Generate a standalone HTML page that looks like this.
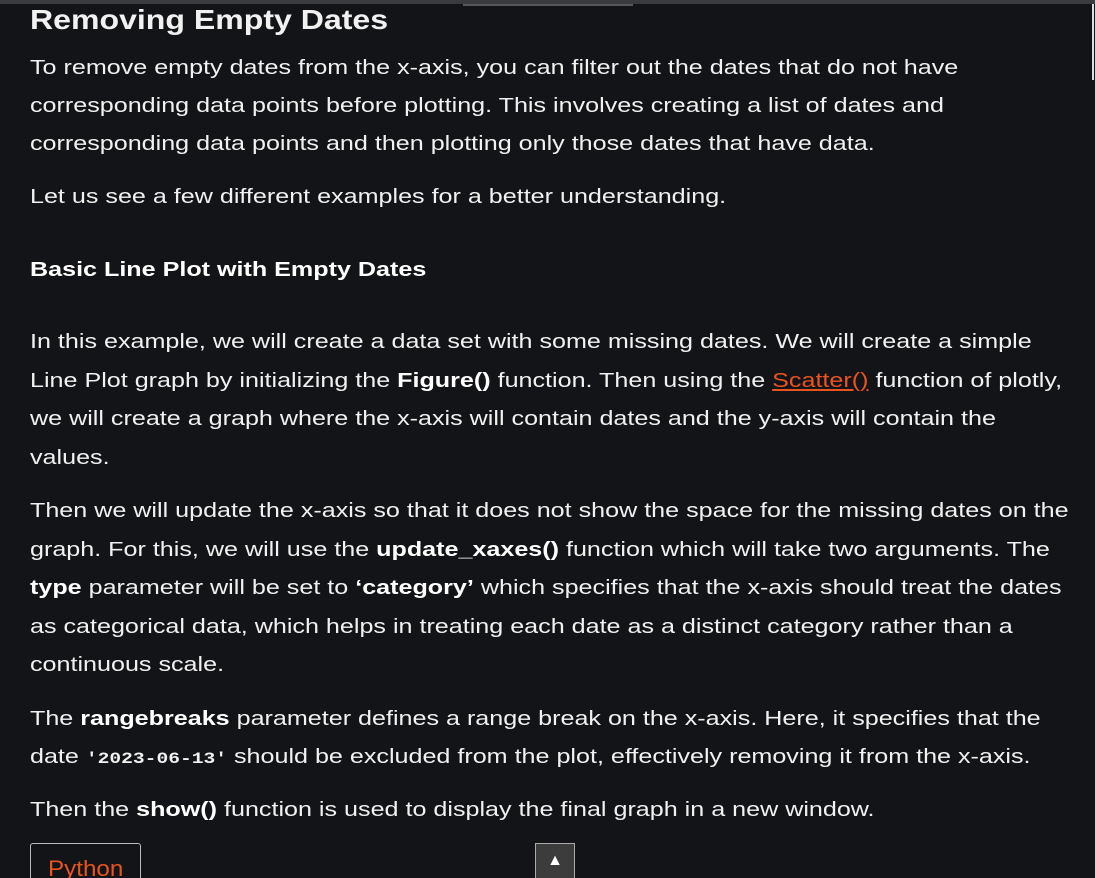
<!DOCTYPE html>
<html><head><meta charset="utf-8"><style>
html,body{margin:0;padding:0;background:#131417;width:1095px;height:878px;overflow:hidden;}
body{font-family:"Liberation Sans",sans-serif;color:#f1f1f1;position:relative;}
.topbar{position:absolute;left:0;top:0;width:1095px;height:4px;background:#3a3b3e;}
.topseg{position:absolute;left:463px;top:4px;width:170px;height:2px;background:#55575b;}
.rline{position:absolute;left:1092px;top:4px;width:2px;height:76px;background:#e0e0e0;}
.l{position:absolute;left:30px;white-space:nowrap;font-size:20.5px;line-height:24px;transform:scaleX(1.225);transform-origin:0 0;}
h2{position:absolute;left:30px;top:4px;margin:0;font-size:28px;font-weight:bold;white-space:nowrap;transform:scaleX(1.145);transform-origin:0 0;}
b{font-weight:bold;color:#fff;}
a{color:#e8541f;text-decoration:underline;}
code{font-family:"Liberation Mono",monospace;font-weight:bold;font-size:16px;}
.box{position:absolute;left:30px;top:843px;width:109px;height:50px;border:1px solid #bbb;border-radius:3px;}
.box span{position:absolute;left:17px;top:12px;color:#e8541f;font-size:22px;transform:scaleX(1.1);transform-origin:0 0;}
.up{position:absolute;left:535px;top:843px;width:38px;height:40px;background:#3c3c3c;border:1px solid #aaa;color:#fff;text-align:center;font-size:16px;line-height:34px;}
</style></head><body>
<div class="topbar"></div><div class="topseg"></div><div class="rline"></div>
<h2>Removing Empty Dates</h2>
<div class="l" style="top:56px">To remove empty dates from the x-axis, you can filter out the dates that do not have</div>
<div class="l" style="top:94px">corresponding data points before plotting. This involves creating a list of dates and</div>
<div class="l" style="top:132px">corresponding data points and then plotting only those dates that have data.</div>
<div class="l" style="top:185px">Let us see a few different examples for a better understanding.</div>
<div class="l" style="top:258px"><b>Basic Line Plot with Empty Dates</b></div>
<div class="l" style="top:330px">In this example, we will create a data set with some missing dates. We will create a simple</div>
<div class="l" style="top:369px">Line Plot graph by initializing the <b>Figure()</b> function. Then using the <a>Scatter()</a> function of plotly,</div>
<div class="l" style="top:407px">we will create a graph where the x-axis will contain dates and the y-axis will contain the</div>
<div class="l" style="top:446px">values.</div>
<div class="l" style="top:499px">Then we will update the x-axis so that it does not show the space for the missing dates on the</div>
<div class="l" style="top:538px">graph. For this, we will use the <b>update_xaxes()</b> function which will take two arguments. The</div>
<div class="l" style="top:576px"><b>type</b> parameter will be set to <b>‘category’</b> which specifies that the x-axis should treat the dates</div>
<div class="l" style="top:615px">as categorical data, which helps in treating each date as a distinct category rather than a</div>
<div class="l" style="top:653px">continuous scale.</div>
<div class="l" style="top:707px">The <b>rangebreaks</b> parameter defines a range break on the x-axis. Here, it specifies that the</div>
<div class="l" style="top:745px">date <code>'2023-06-13'</code> should be excluded from the plot, effectively removing it from the x-axis.</div>
<div class="l" style="top:798px">Then the <b>show()</b> function is used to display the final graph in a new window.</div>
<div class="box"><span>Python</span></div>
<div class="up">▲</div>
</body></html>
